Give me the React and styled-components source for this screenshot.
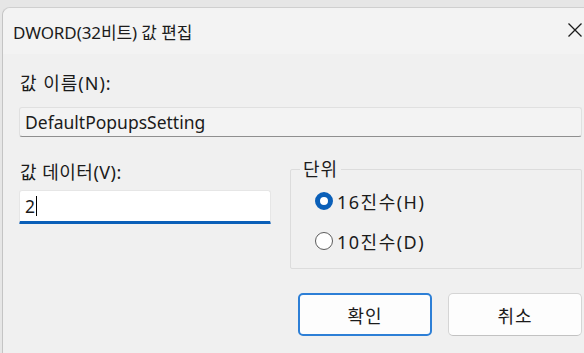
import React from 'react'
import styled, { createGlobalStyle } from 'styled-components'

const GlobalStyle = createGlobalStyle`
  html, body {
    margin: 0;
    padding: 0;
    background: #e6e6e6;
    overflow: hidden;
  }
  body {
    font-family: 'Noto Sans', 'Noto Sans CJK KR', sans-serif;
    color: #1b1b1b;
  }
`

const Window = styled.div`
  margin: 7px 0 0 2px;
  height: 346px;
  background: #f0f0f0;
  border-top: 1px solid #cfcfcf;
  border-left: 1px solid #c4c4c4;
  border-top-left-radius: 8px;
  display: flex;
  flex-direction: column;
`

const TitleBar = styled.div`
  height: 46px;
  display: flex;
  align-items: center;
  justify-content: space-between;
  padding: 0 1px 0 10px;
  background: #f3f3f3;
  border-top-left-radius: 8px;
`

const Title = styled.span`
  font-size: 17px;
  letter-spacing: -0.1px;
`

const CloseIcon = styled.svg`
  width: 16px;
  height: 16px;
  margin-top: -2px;
`

const Body = styled.div`
  padding: 18px 2px 0 16px;
  display: flex;
  flex-direction: column;
`

const Label = styled.div`
  font-size: 18px;
  letter-spacing: ${(p) => p.$spacing || '1px'};
  line-height: 22px;
  height: 22px;
  padding-left: 1px;
`

const NameField = styled.div`
  margin-top: 13px;
  height: 30px;
  box-sizing: border-box;
  background: #f3f3f3;
  border: 1px solid #e0e0e0;
  border-bottom: 1px solid #8f8f8f;
  border-radius: 3px;
  display: flex;
  align-items: center;
  padding-left: 5px;
  font-size: 17.5px;
`

const Row = styled.div`
  display: flex;
  margin-top: 24px;
`

const DataColumn = styled.div`
  width: 252px;
  display: flex;
  flex-direction: column;
`

const DataInput = styled.div`
  margin-top: 7px;
  height: 34px;
  box-sizing: border-box;
  background: #ffffff;
  border: 1px solid #e6e6e6;
  border-bottom: 3px solid #0a5fb8;
  border-radius: 3px 3px 1px 1px;
  display: flex;
  align-items: center;
  padding-left: 5px;
  font-size: 17.5px;
`

const Caret = styled.span`
  display: inline-block;
  width: 1px;
  height: 20px;
  background: #000;
  margin-left: 1px;
`

const GroupBox = styled.fieldset`
  flex: 1;
  margin: 0 0 0 19px;
  padding: 12px 0 0 24px;
  height: 108px;
  box-sizing: border-box;
  border: 1px solid #dcdcdc;
  border-radius: 2px;
  display: flex;
  flex-direction: column;
  gap: 16px;
`

const Legend = styled.legend`
  font-size: 18px;
  letter-spacing: 1px;
  line-height: 16px;
  padding: 0 3px;
  margin-left: -15px;
`

const RadioRow = styled.label`
  display: flex;
  align-items: center;
  gap: 4px;
  font-size: 18px;
  letter-spacing: 1.5px;
  height: 24px;
`

const RadioDot = styled.span`
  width: 18px;
  height: 18px;
  box-sizing: border-box;
  border-radius: 50%;
  border: ${(p) => (p.$checked ? '5px solid #0a5fb8' : '1px solid #5c5c5c')};
  background: #fff;
  flex-shrink: 0;
`

const Buttons = styled.div`
  display: flex;
  justify-content: flex-end;
  gap: 16px;
  margin-top: 24px;
`

const Button = styled.button`
  width: 134px;
  height: 43px;
  box-sizing: border-box;
  background: #fdfdfd;
  border: ${(p) => (p.$primary ? '2px solid #2d7fd6' : '1px solid #d5d5d5')};
  border-bottom-color: ${(p) => (p.$primary ? '#2d7fd6' : '#c2c2c2')};
  border-radius: 5px;
  font-family: 'Noto Sans CJK KR', sans-serif;
  font-size: 18px;
  letter-spacing: 1px;
  color: #1b1b1b;
`

export default function App() {
  return (
    <>
      <GlobalStyle />
      <Window>
        <TitleBar>
          <Title>DWORD(32비트) 값 편집</Title>
          <CloseIcon viewBox="0 0 16 16">
            <path d="M1.5 1.5 L14.5 14.5 M14.5 1.5 L1.5 14.5" stroke="#1b1b1b" strokeWidth="1.3" />
          </CloseIcon>
        </TitleBar>
        <Body>
          <Label>값 이름(N):</Label>
          <NameField>DefaultPopupsSetting</NameField>
          <Row>
            <DataColumn>
              <Label $spacing="0.5px">값 데이터(V):</Label>
              <DataInput>
                2<Caret />
              </DataInput>
            </DataColumn>
            <GroupBox>
              <Legend>단위</Legend>
              <RadioRow>
                <RadioDot $checked />
                16진수(H)
              </RadioRow>
              <RadioRow>
                <RadioDot />
                10진수(D)
              </RadioRow>
            </GroupBox>
          </Row>
          <Buttons>
            <Button $primary>확인</Button>
            <Button>취소</Button>
          </Buttons>
        </Body>
      </Window>
    </>
  )
}
